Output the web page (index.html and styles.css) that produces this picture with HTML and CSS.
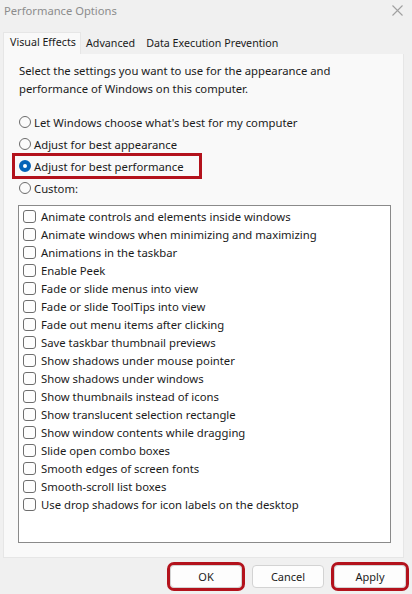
FILE: index.html
```html
<!DOCTYPE html>
<html>
<head>
<meta charset="utf-8">
<title>Performance Options</title>
<link rel="stylesheet" href="styles.css">
</head>
<body>
<div class="dialog">
  <div class="titlebar">
    <span class="title">Performance Options</span>
    <svg class="close" width="11" height="11" viewBox="0 0 11 11"><path d="M0.5 0.5L10.5 10.5M10.5 0.5L0.5 10.5" stroke="#a0a0a0" stroke-width="1.1" fill="none"/></svg>
  </div>
  <div class="tabs">
    <div class="tab active">Visual Effects</div>
    <div class="tab">Advanced</div>
    <div class="tab">Data Execution Prevention</div>
  </div>
  <div class="panel">
    <p class="desc">Select the settings you want to use for the appearance and<br>performance of Windows on this computer.</p>
    <div class="radios">
      <div class="radio-row"><span class="radio"></span><span>Let Windows choose what's best for my computer</span></div>
      <div class="radio-row"><span class="radio"></span><span>Adjust for best appearance</span></div>
      <div class="radio-row highlight"><span class="radio checked"></span><span>Adjust for best performance</span></div>
      <div class="radio-row"><span class="radio"></span><span>Custom:</span></div>
    </div>
    <div class="listbox">
      <div class="check-row"><span class="check"></span><span>Animate controls and elements inside windows</span></div>
      <div class="check-row"><span class="check"></span><span>Animate windows when minimizing and maximizing</span></div>
      <div class="check-row"><span class="check"></span><span>Animations in the taskbar</span></div>
      <div class="check-row"><span class="check"></span><span>Enable Peek</span></div>
      <div class="check-row"><span class="check"></span><span>Fade or slide menus into view</span></div>
      <div class="check-row"><span class="check"></span><span>Fade or slide ToolTips into view</span></div>
      <div class="check-row"><span class="check"></span><span>Fade out menu items after clicking</span></div>
      <div class="check-row"><span class="check"></span><span>Save taskbar thumbnail previews</span></div>
      <div class="check-row"><span class="check"></span><span>Show shadows under mouse pointer</span></div>
      <div class="check-row"><span class="check"></span><span>Show shadows under windows</span></div>
      <div class="check-row"><span class="check"></span><span>Show thumbnails instead of icons</span></div>
      <div class="check-row"><span class="check"></span><span>Show translucent selection rectangle</span></div>
      <div class="check-row"><span class="check"></span><span>Show window contents while dragging</span></div>
      <div class="check-row"><span class="check"></span><span>Slide open combo boxes</span></div>
      <div class="check-row"><span class="check"></span><span>Smooth edges of screen fonts</span></div>
      <div class="check-row"><span class="check"></span><span>Smooth-scroll list boxes</span></div>
      <div class="check-row"><span class="check"></span><span>Use drop shadows for icon labels on the desktop</span></div>
    </div>
  </div>
  <div class="buttons">
    <button class="btn marked">OK</button>
    <button class="btn">Cancel</button>
    <button class="btn marked">Apply</button>
  </div>
</div>
</body>
</html>
```
FILE: styles.css
```css
html, body {
  margin: 0;
  padding: 0;
}
body {
  width: 412px;
  height: 594px;
  overflow: hidden;
  background: #f0f0f0;
  font-family: "Noto Sans", "Open Sans", sans-serif;
  font-size: 11.3px;
  color: #1b1b1b;
}
.dialog {
  display: flex;
  flex-direction: column;
  height: 594px;
}
.titlebar {
  height: 24px;
  box-sizing: border-box;
  display: flex;
  align-items: center;
  justify-content: space-between;
  padding: 0 9px 4px 4px;
}
.title {
  font-size: 11.2px;
  color: #8c8c8c;
}
.close {
  display: block;
}
.tabs {
  display: flex;
  margin-top: 8px;
  padding-left: 3px;
  height: 22px;
  align-items: flex-end;
}
.tab {
  font-size: 10.7px;
  padding: 0 6px 0 5px;
  height: 20px;
  line-height: 19px;
  white-space: nowrap;
  color: #1b1b1b;
}
.tab.active {
  height: 22px;
  line-height: 18px;
  background: #f9f9f9;
  border: 1px solid #e6e6e6;
  border-bottom: none;
  padding: 0 0 0 6px;
  box-sizing: border-box;
  width: 78px;
}
.panel {
  margin-left: 3px;
  width: 401px;
  height: 504px;
  box-sizing: border-box;
  background: #f9f9f9;
  border: 1px solid #e6e6e6;
  border-top: none;
  padding: 8px 12px 0 14px;
}
.desc {
  margin: 0;
  line-height: 18px;
  padding-left: 1px;
}
.radios {
  margin-top: 13px;
  display: flex;
  flex-direction: column;
}
.radio-row {
  display: flex;
  align-items: center;
  height: 22px;
  gap: 3px;
  white-space: nowrap;
}
.radio-row.highlight {
  outline: 3px solid #b3121c;
  outline-offset: -1px;
  box-sizing: border-box;
  width: 186px;
  margin-left: -4px;
  padding-left: 4px;
}
.radio {
  width: 12px;
  height: 12px;
  border: 1px solid #6b6b6b;
  border-radius: 50%;
  box-sizing: border-box;
  background: #fbfbfb;
  margin-left: 1px;
  flex: none;
}
.radio.checked {
  border: 4px solid #0563b8;
  background: #ffffff;
}
.listbox {
  margin-top: 6px;
  margin-left: 0;
  width: 373px;
  height: 338px;
  box-sizing: border-box;
  background: #ffffff;
  border: 1px solid #8a8a8a;
  padding: 1px 0 0 4px;
}
.check-row {
  display: flex;
  align-items: center;
  height: 18px;
  gap: 5px;
  white-space: nowrap;
}
.check {
  width: 13px;
  height: 13px;
  box-sizing: border-box;
  border: 1px solid #6e6e6e;
  border-radius: 3px;
  background: #fdfdfd;
  flex: none;
}
.buttons {
  display: flex;
  justify-content: flex-end;
  gap: 10px;
  padding: 7px 6px 0 0;
}
.btn {
  width: 72px;
  height: 23px;
  font-family: "Noto Sans", "Open Sans", sans-serif;
  font-size: 11px;
  color: #1b1b1b;
  background: #fdfdfd;
  border: 1px solid #d3d3d3;
  border-radius: 4px;
  padding: 0;
}
.btn.marked {
  outline: 3px solid #b3121c;
  outline-offset: 0px;
}
```
